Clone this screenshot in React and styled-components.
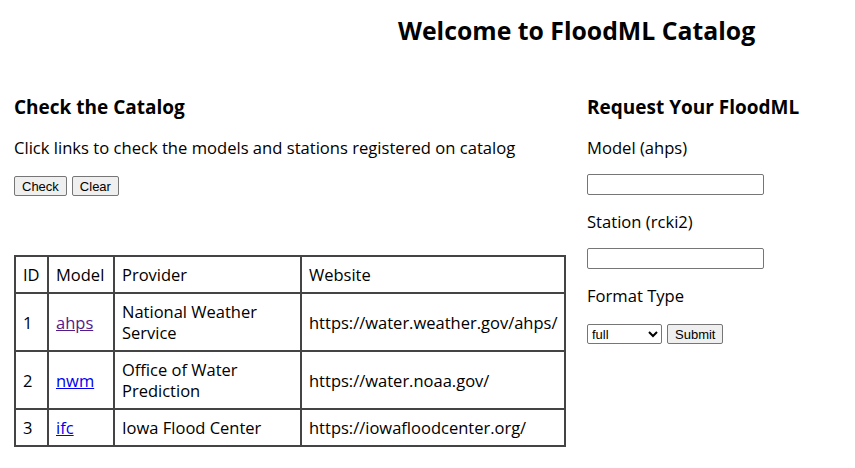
import React from "react";
import styled, { createGlobalStyle } from "styled-components";

const models = [
  { id: 1, name: "ahps", provider: "National Weather Service", site: "https://water.weather.gov/ahps/", visited: true },
  { id: 2, name: "nwm", provider: "Office of Water Prediction", site: "https://water.noaa.gov/" },
  { id: 3, name: "ifc", provider: "Iowa Flood Center", site: "https://iowafloodcenter.org/" },
];

const App = () => {
  return (
    <Page>
      <GlobalStyle />
      <Title>Welcome to FloodML Catalog</Title>
      <Main>
        <Left>
          <Heading>Check the Catalog</Heading>
          <Text>Click links to check the models and stations registered on catalog</Text>
          <Buttons>
            <Button>Check</Button>
            <Button>Clear</Button>
          </Buttons>
          <Table>
            <colgroup>
              <col style={{ width: 33 }} />
              <col style={{ width: 66 }} />
              <col style={{ width: 187 }} />
              <col style={{ width: 264 }} />
            </colgroup>
            <thead>
              <tr>
                <Cell as="th">ID</Cell>
                <Cell as="th">Model</Cell>
                <Cell as="th">Provider</Cell>
                <Cell as="th">Website</Cell>
              </tr>
            </thead>
            <tbody>
              {models.map((m) => (
                <tr key={m.id}>
                  <Cell>{m.id}</Cell>
                  <Cell>
                    <Link href="#" $visited={m.visited}>{m.name}</Link>
                  </Cell>
                  <Cell>{m.provider}</Cell>
                  <Cell>{m.site}</Cell>
                </tr>
              ))}
            </tbody>
          </Table>
        </Left>
        <Right>
          <Heading>Request Your FloodML</Heading>
          <Label>Model (ahps)</Label>
          <Input />
          <Label>Station (rcki2)</Label>
          <Input />
          <Label>Format Type</Label>
          <Buttons $top={17}>
            <Select defaultValue="full">
              <option value="full">full</option>
              <option value="short">short</option>
            </Select>
            <Button>Submit</Button>
          </Buttons>
        </Right>
      </Main>
    </Page>
  );
};

export default App;

const GlobalStyle = createGlobalStyle`
  body {
    margin: 0;
    background: #fff;
    font-family: "Open Sans", "Noto Sans", sans-serif;
    color: #000;
  }
`;

const Page = styled.div`
  width: 855px;
  height: 468px;
  overflow: hidden;
`;

const Title = styled.h1`
  margin: 0;
  padding: 14px 0 0 398px;
  font-size: 24.8px;
  line-height: 32px;
  font-weight: 700;
`;

const Main = styled.div`
  display: flex;
  padding: 0 14px;
  margin-top: 47px;
`;

const Left = styled.div`
  width: 551px;
`;

const Right = styled.div`
  margin-left: 22px;
  display: flex;
  flex-direction: column;
  align-items: flex-start;
`;

const Heading = styled.h2`
  margin: 0;
  font-size: 19px;
  line-height: 28px;
  font-weight: 700;
`;

const Text = styled.p`
  margin: 16px 0 0;
  font-size: 16.6px;
  line-height: 22px;
`;

const Label = styled.div`
  margin-top: 16px;
  font-size: 16.6px;
  line-height: 22px;
  & + input {
    margin-top: 15px;
  }
`;

const Buttons = styled.div`
  display: flex;
  gap: 5px;
  margin-top: ${(p) => p.$top ?? 17}px;
`;

const Button = styled.button`
  box-sizing: border-box;
  height: 20px;
  padding: 0 7px;
  background: #efefef;
  border: 1px solid #767676;
  border-radius: 2px;
  font-family: "Liberation Sans", Arial, sans-serif;
  font-size: 13px;
  color: #000;
`;

const Input = styled.input`
  box-sizing: border-box;
  width: 177px;
  height: 21px;
  border: 1px solid #767676;
  border-radius: 2px;
  padding: 1px 2px;
`;

const Select = styled.select`
  box-sizing: border-box;
  width: 75px;
  height: 20px;
  border: 1px solid #767676;
  border-radius: 2px;
  background: #fff;
  font-family: "Liberation Sans", Arial, sans-serif;
  font-size: 13px;
  padding: 0;
`;

const Table = styled.table`
  margin-top: 59px;
  width: 550px;
  table-layout: fixed;
  border-collapse: collapse;
  border: 2px solid #444;
`;

const Cell = styled.td`
  border: 2px solid #444;
  padding: 7px 7px;
  text-align: left;
  font-weight: 400;
  font-size: 16.5px;
  line-height: 21px;
  vertical-align: middle;
`;

const Link = styled.a`
  color: ${(p) => (p.$visited ? "#551a8b" : "#0000ee")};
  text-decoration: underline;
`;
